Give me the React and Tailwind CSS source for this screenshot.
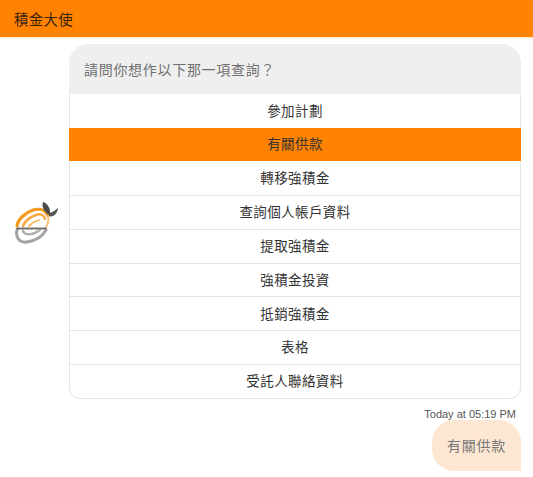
const items = ["參加計劃","有關供款","轉移強積金","查詢個人帳戶資料","提取強積金","強積金投資","抵銷強積金","表格","受託人聯絡資料"];

function Logo() {
  return (
    <svg width="44" height="44" viewBox="0 0 44 44" fill="none" className="blur-[0.5px]">
      <g strokeLinecap="round" fill="none">
        <path d="M3 25 C4 18 11 12 19 9 C26 7 32 9 34 15" stroke="#f39a1f" strokeWidth="3.2" />
        <path d="M9 25 C11 20 16 16 22 14 C27 12 30 14 31 18" stroke="#f4a93c" strokeWidth="2.4" />
        <path d="M15 25 C18 22 21 20 25 19" stroke="#f6b75a" strokeWidth="1.8" />
        <path d="M34 15 C35 19 34 23 32 26" stroke="#f5c27a" strokeWidth="2" />
        <path d="M3 29 C1 37 6 42 13 41 C21 40 28 36 32 29" stroke="#a3a3a3" strokeWidth="3" />
        <path d="M9 30 C11 35 19 34 26 29" stroke="#b0b0b0" strokeWidth="2.4" />
        <path d="M3 27.5 L32 27.5" stroke="#6f6a62" strokeWidth="1.8" strokeDasharray="3 1.4" />
      </g>
      <path d="M29 1 C33 2 37 7 36 14 C32 13 27 7 29 1 Z" fill="#4a4a4a" />
      <path d="M35 12 C38 12 41 9 44 7 C44 12 39 17 35 15 Z" fill="#555555" />
    </svg>
  );
}

export default function App() {
  return (
    <div className="w-[533px] h-[477px] bg-white overflow-hidden font-['Noto_Sans_CJK_TC','Liberation_Sans',sans-serif]">
      <header className="h-[37px] bg-[#ff8300] flex items-center pl-[14px] text-[14.5px] tracking-[0.25px] text-[#3a2408] shadow-[0_1px_2px_rgba(255,131,0,0.25)]">積金大使</header>
      <div className="flex items-center pt-[7px] pr-3">
        <div className="w-[69px] shrink-0 flex pl-[14px] pt-[2px]"><Logo /></div>
        <div className="flex-1 rounded-t-[20px] rounded-b-[11px] shadow-[inset_0_0_0_1px_#e6e6e6] overflow-hidden bg-white h-[355px] flex flex-col">
          <div className="h-[50px] shrink-0 bg-[#efefef] flex items-center pl-[15px] text-[14px] tracking-[0.7px] text-[#6f6f6f]">請問你想作以下那一項查詢？</div>
          {items.map((t, i) => (
            <div key={t} className={`h-[33.72px] shrink-0 flex items-center justify-center pb-[2px] text-[13.5px] tracking-[0.4px] text-[#333333] ${i > 2 ? "border-t border-[#e3e3e3]" : ""} ${i === 1 ? "bg-[#ff8300]" : ""}`}>{t}</div>
          ))}
        </div>
      </div>
      <div className="text-right pr-[17px] pt-[9px] text-[11px] leading-[12px] font-['Liberation_Sans',sans-serif] text-[#555555]">Today at 05:19 PM</div>
      <div className="flex justify-end pr-3">
        <div className="w-[89px] h-[51px] bg-[#fde7d2] rounded-[22px] rounded-br-none flex items-center justify-center text-[14px] tracking-[0.7px] text-[#777777]">有關供款</div>
      </div>
    </div>
  );
}
